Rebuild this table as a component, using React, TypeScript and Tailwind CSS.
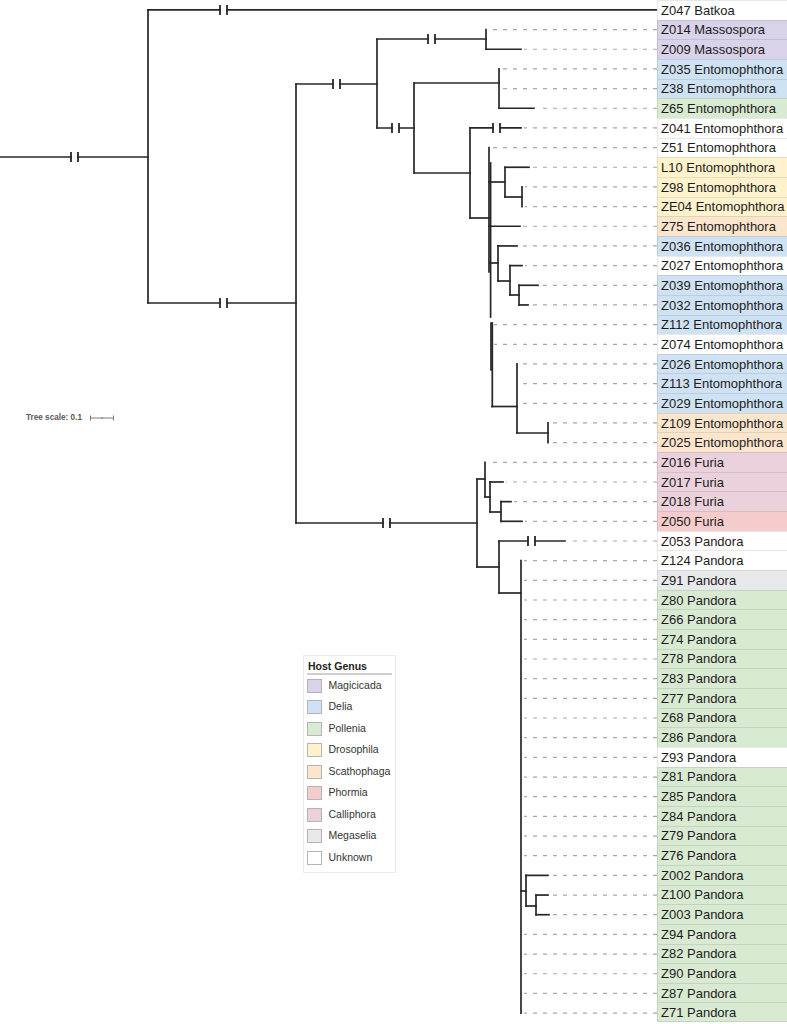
const ROW = 19.67;
const Y = (i: number) => 9.9 + ROW * i;

type Host =
  | "Magicicada"
  | "Delia"
  | "Pollenia"
  | "Drosophila"
  | "Scathophaga"
  | "Phormia"
  | "Calliphora"
  | "Megaselia"
  | "Unknown";

const hostBg: Record<Host, string> = {
  Magicicada: "bg-[#d9d2e9]",
  Delia: "bg-[#cfe2f3]",
  Pollenia: "bg-[#d9ead3]",
  Drosophila: "bg-[#fff2cc]",
  Scathophaga: "bg-[#fce5cd]",
  Phormia: "bg-[#f4cccc]",
  Calliphora: "bg-[#ead1dc]",
  Megaselia: "bg-[#e8e9ea]",
  Unknown: "bg-white",
};

// [label, host, x where the branch ends]
const leaves: [string, Host, number][] = [
  ["Z047 Batkoa", "Unknown", 657],
  ["Z014 Massospora", "Magicicada", 486],
  ["Z009 Massospora", "Magicicada", 521],
  ["Z035 Entomophthora", "Delia", 499],
  ["Z38 Entomophthora", "Delia", 499],
  ["Z65 Entomophthora", "Pollenia", 534],
  ["Z041 Entomophthora", "Unknown", 521],
  ["Z51 Entomophthora", "Unknown", 489],
  ["L10 Entomophthora", "Drosophila", 529],
  ["Z98 Entomophthora", "Drosophila", 522],
  ["ZE04 Entomophthora", "Drosophila", 522],
  ["Z75 Entomophthora", "Scathophaga", 520],
  ["Z036 Entomophthora", "Delia", 517],
  ["Z027 Entomophthora", "Unknown", 522],
  ["Z039 Entomophthora", "Delia", 538],
  ["Z032 Entomophthora", "Delia", 528],
  ["Z112 Entomophthora", "Delia", 491],
  ["Z074 Entomophthora", "Unknown", 491],
  ["Z026 Entomophthora", "Delia", 517],
  ["Z113 Entomophthora", "Delia", 517],
  ["Z029 Entomophthora", "Delia", 517],
  ["Z109 Entomophthora", "Scathophaga", 548],
  ["Z025 Entomophthora", "Scathophaga", 548],
  ["Z016 Furia", "Calliphora", 485],
  ["Z017 Furia", "Calliphora", 503],
  ["Z018 Furia", "Calliphora", 511],
  ["Z050 Furia", "Phormia", 522],
  ["Z053 Pandora", "Unknown", 565],
  ["Z124 Pandora", "Unknown", 521],
  ["Z91 Pandora", "Megaselia", 521],
  ["Z80 Pandora", "Pollenia", 521],
  ["Z66 Pandora", "Pollenia", 521],
  ["Z74 Pandora", "Pollenia", 521],
  ["Z78 Pandora", "Pollenia", 521],
  ["Z83 Pandora", "Pollenia", 521],
  ["Z77 Pandora", "Pollenia", 521],
  ["Z68 Pandora", "Pollenia", 521],
  ["Z86 Pandora", "Pollenia", 521],
  ["Z93 Pandora", "Unknown", 521],
  ["Z81 Pandora", "Pollenia", 521],
  ["Z85 Pandora", "Pollenia", 521],
  ["Z84 Pandora", "Pollenia", 521],
  ["Z79 Pandora", "Pollenia", 521],
  ["Z76 Pandora", "Pollenia", 521],
  ["Z002 Pandora", "Pollenia", 548],
  ["Z100 Pandora", "Pollenia", 548],
  ["Z003 Pandora", "Pollenia", 549],
  ["Z94 Pandora", "Pollenia", 521],
  ["Z82 Pandora", "Pollenia", 521],
  ["Z90 Pandora", "Pollenia", 521],
  ["Z87 Pandora", "Pollenia", 521],
  ["Z71 Pandora", "Pollenia", 521],
];

const legend: Host[] = [
  "Magicicada",
  "Delia",
  "Pollenia",
  "Drosophila",
  "Scathophaga",
  "Phormia",
  "Calliphora",
  "Megaselia",
  "Unknown",
];

// horizontal: [y, x1, x2]
const hs: [number, number, number][] = [
  [157, 0, 148],
  [Y(0), 148, 657],
  [303, 148, 296],
  [84, 296, 377],
  [39, 377, 486],
  [128, 377, 414],
  [83, 414, 499],
  [173, 414, 470],
  [Y(6), 470, 521],
  [218, 470, 489],
  [182, 489, 505],
  [197, 505, 522],
  [Y(11), 489, 520],
  [263, 490, 498],
  [281, 498, 510],
  [295, 510, 519],
  [406.5, 492, 517],
  [433, 517, 548],
  [523, 296, 477],
  [479, 477, 485],
  [497, 485, 490],
  [512, 490, 501],
  [567, 477, 499],
  [593, 499, 521],
  [891, 521, 526],
  [906, 526, 536],
  // leaf branches
  [Y(2), 486, 521],
  [Y(5), 499, 534],
  [Y(8), 505, 529],
  [Y(12), 498, 517],
  [Y(13), 510, 522],
  [Y(14), 519, 538],
  [Y(15), 519, 528],
  [Y(24), 490, 503],
  [Y(25), 501, 511],
  [Y(26), 501, 522],
  [Y(27), 499, 565],
  [Y(44), 526, 548],
  [Y(45), 536, 548],
  [Y(46), 536, 549],
];

// vertical: [x, y1, y2]
const vs: [number, number, number][] = [
  [148, Y(0), 303],
  [296, 84, 523],
  [377, 39, 128],
  [486, Y(1), Y(2)],
  [414, 83, 173],
  [499, Y(3), Y(5)],
  [470, Y(6), 218],
  [489, Y(7), 272],
  [490.6, 163, 317],
  [491, 323, 370],
  [492.3, 323, 406.5],
  [505, Y(8), 197],
  [522, Y(9), Y(10)],
  [498, Y(12), 281],
  [510, Y(13), 295],
  [519, Y(14), Y(15)],
  [517, Y(18), 433],
  [548, Y(21), Y(22)],
  [477, 479, 567],
  [485, Y(23), 497],
  [490, Y(24), 512],
  [501, Y(25), Y(26)],
  [499, Y(27), 593],
  [521, Y(28), Y(51)],
  [526, Y(44), 906],
  [536, Y(45), Y(46)],
];

// broken branches: [x of first tick, y]
const breaks: [number, number][] = [
  [71, 157],
  [220, Y(0)],
  [220, 303],
  [333, 84],
  [428, 39],
  [392, 128],
  [493, Y(6)],
  [383, 523],
  [528, Y(27)],
];

function Tree() {
  return (
    <svg width="657" height="1024" viewBox="0 0 657 1024" className="block">
      {/* dashed leaders to the labels */}
      <g stroke="#a8a8a8" strokeWidth="1.2" strokeDasharray="4 6">
        {leaves.map(([, , end], i) =>
          end < 657 ? <line key={i} x1={657} y1={Y(i)} x2={end + 3} y2={Y(i)} /> : null,
        )}
      </g>
      <g stroke="#262626" strokeWidth="1.7" strokeLinecap="square" fill="none">
        {hs.map(([y, x1, x2], i) => (
          <line key={"h" + i} x1={x1} y1={y} x2={x2} y2={y} />
        ))}
        {vs.map(([x, y1, y2], i) => (
          <line key={"v" + i} x1={x} y1={y1} x2={x} y2={y2} />
        ))}
      </g>
      {breaks.map(([x, y], i) => (
        <g key={"b" + i}>
          <rect x={x + 0.6} y={y - 2} width={5.8} height={4} fill="#fff" />
          <line x1={x} y1={y - 5} x2={x} y2={y + 5} stroke="#262626" strokeWidth="1.8" />
          <line x1={x + 7} y1={y - 5} x2={x + 7} y2={y + 5} stroke="#262626" strokeWidth="1.8" />
        </g>
      ))}
    </svg>
  );
}

export default function App() {
  return (
    <div className="flex h-[1024px] w-[787px] overflow-hidden bg-white font-['Liberation_Sans',Arial,sans-serif] text-[#1c1c1c]">
      <div className="relative w-[657px] shrink-0">
        <Tree />

        <div className="absolute left-[26px] top-[412px] flex h-[12px] items-center gap-[8px] text-[8.2px] font-bold text-[#5a5a5a]">
          <span>Tree scale: 0.1</span>
          <svg width="24" height="8" viewBox="0 0 24 8" className="block">
            <g stroke="#7a7a7a" strokeWidth="1">
              <line x1="0.5" y1="4" x2="23.5" y2="4" />
              <line x1="0.5" y1="1.5" x2="0.5" y2="6.5" />
              <line x1="23.5" y1="1.5" x2="23.5" y2="6.5" />
              <line x1="12" y1="3" x2="12" y2="5" />
            </g>
          </svg>
        </div>

        <div className="absolute left-[303px] top-[655px] w-[93px] border border-[#ececec] bg-white px-[3px] pt-[3px] pb-[3px]">
          <div className="border-b-2 border-[#cfcfcf] px-[1px] text-[10.5px] font-bold leading-[14px] text-[#1e1e1e]">
            Host Genus
          </div>
          {legend.map((h) => (
            <div key={h} className="flex h-[21.5px] items-center gap-[7px] text-[10.5px] text-[#333]">
              <span className={`h-[14px] w-[14.5px] shrink-0 border border-[#b4b4b4] ${hostBg[h]}`} />
              <span>{h}</span>
            </div>
          ))}
        </div>
      </div>

      <div className="flex w-[130px] shrink-0 flex-col">
        {leaves.map(([label, host], i) => (
          <div
            key={label}
            className={`flex h-[19.67px] shrink-0 items-center border-l border-t border-black/[0.09] pl-[3px] text-[13px] leading-none whitespace-nowrap ${hostBg[host]} ${
              i === leaves.length - 1 ? "border-b" : ""
            }`}
          >
            {label}
          </div>
        ))}
      </div>
    </div>
  );
}
